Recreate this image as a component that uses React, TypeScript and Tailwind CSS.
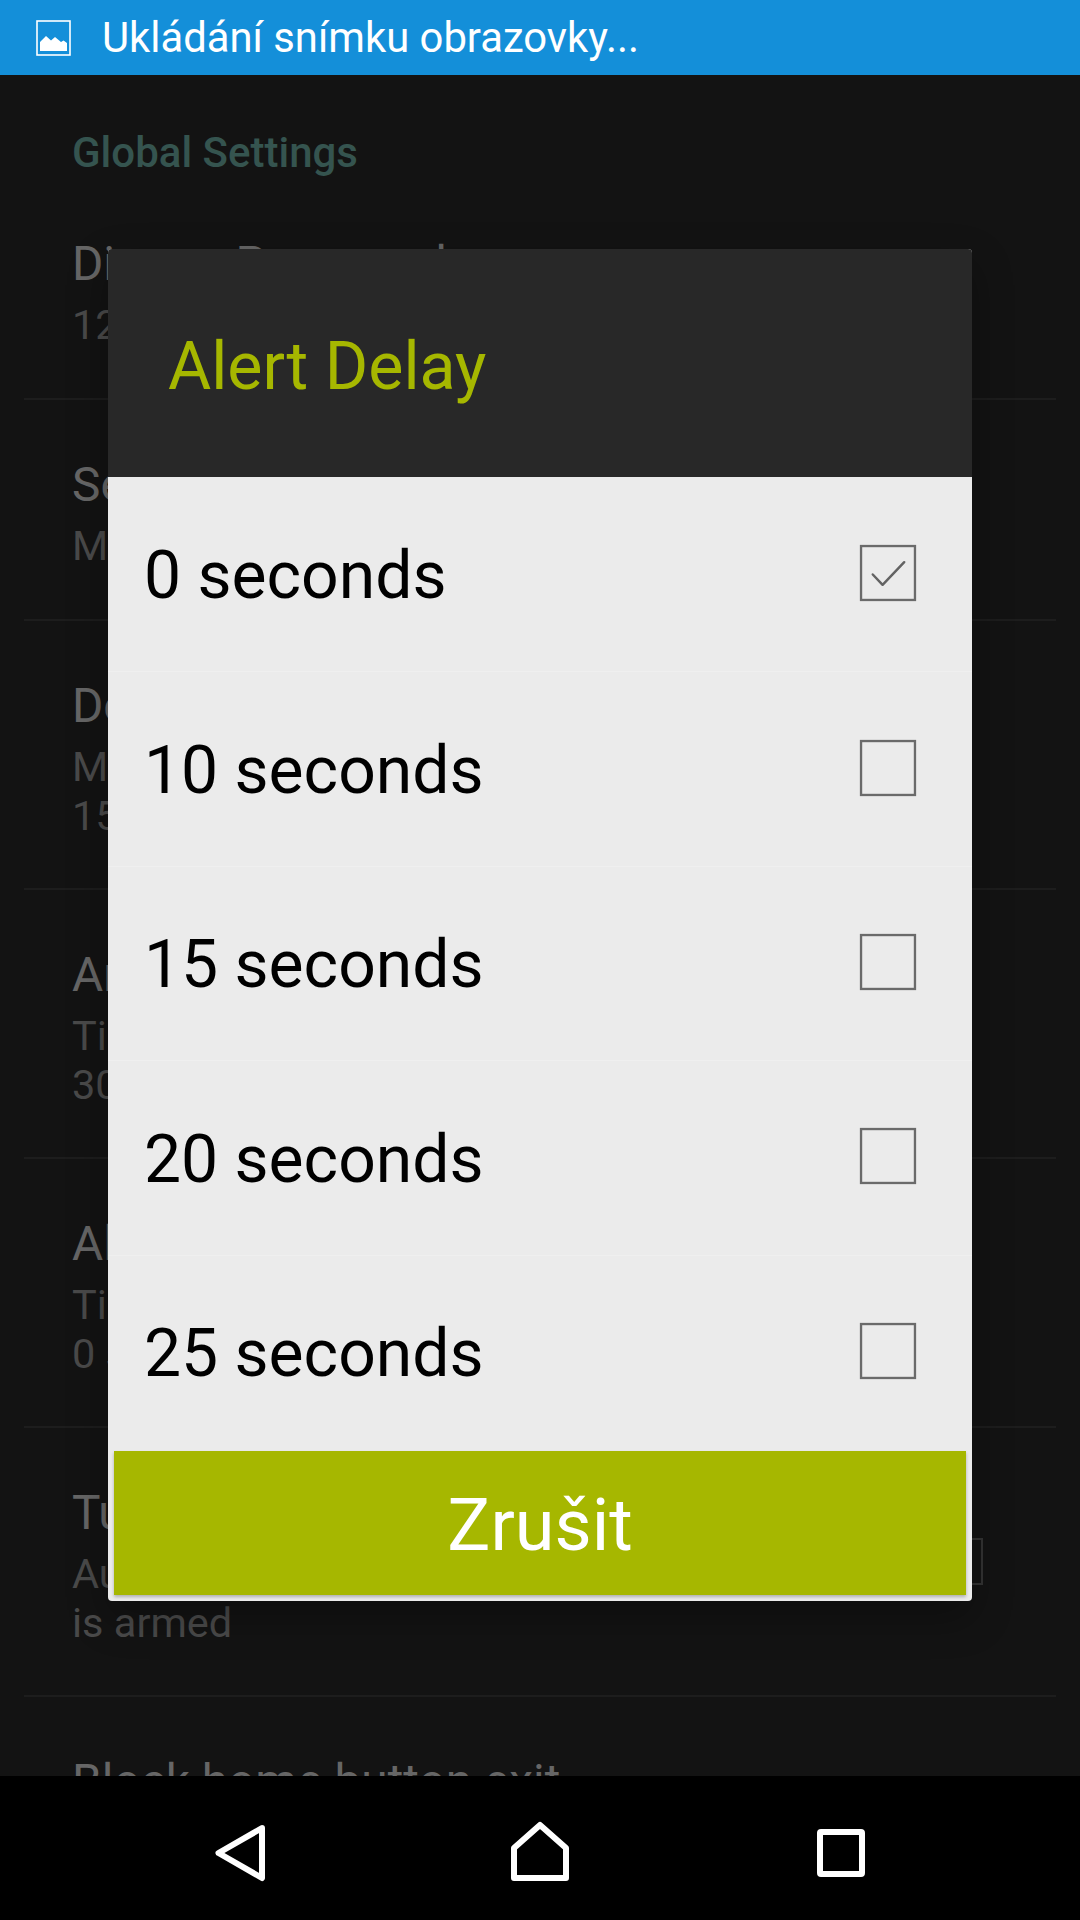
const options = ['0 seconds', '10 seconds', '15 seconds', '20 seconds', '25 seconds']

const settings = [
  { title: 'Disarm Password', lines: ['12 characters max'], h: 'h-[221px]' },
  { title: 'Set Mode', lines: ['Mode for the alert sensors'], h: 'h-[221px]' },
  { title: 'Detection Delay', lines: ['Minimum time before detecting', '15 seconds'], h: 'h-[269px]' },
  { title: 'Arm Delay', lines: ['Time before the device arms', '30 seconds'], h: 'h-[269px]' },
  { title: 'Alert Delay', lines: ['Time before the alert sounds', '0 seconds'], h: 'h-[269px]' },
  { title: 'Turn on automatically', lines: ['Automatically turn on when device', 'is armed'], h: 'h-[269px]', check: true },
]

function Box({ checked }: { checked?: boolean }) {
  return (
    <svg width="57" height="57" viewBox="0 0 58 58" fill="none" className="shrink-0 -translate-y-[1.5px] -translate-x-[0.5px]">
      <rect x="1.5" y="1.5" width="55" height="55" stroke="#6a6a6a" strokeWidth="2.5" />
      {checked && <path d="M13.5 30.5 L23.5 41 L45.5 18" stroke="#636363" strokeWidth="2.5" strokeLinecap="round" strokeLinejoin="round" />}
    </svg>
  )
}

export default function App() {
  return (
    <div className="w-[1080px] h-[1920px] flex flex-col overflow-hidden bg-[#131313] font-['Roboto',sans-serif]">
      {/* Status bar */}
      <div className="h-[75px] shrink-0 bg-[#148fd9] flex items-center pl-[36px] gap-[31px]">
        <svg width="35" height="36" viewBox="0 0 35 36" fill="none">
          <rect x="1" y="1" width="33" height="34" stroke="#fff" strokeWidth="1.6" />
          <path d="M4 31 V22 L10 16 L15 20.5 L19 17 L25 22 L27.5 20.5 L31 23 V31 Z" fill="#fff" />
        </svg>
        <span className="text-white text-[41.8px] leading-none">Ukládání snímku obrazovky...</span>
      </div>

      {/* Settings list behind the dialog */}
      <div className="relative flex-1 overflow-hidden">
        <div className="px-[24px]">
          <div className="h-[104px] pl-[48px] pt-[54px] text-[#35544f] text-[42px] leading-[48px] font-medium">Global Settings</div>
          {settings.map(s => (
            <div key={s.title} className={`${s.h} relative border-b-2 border-[#1d1d1d] pl-[48px] pt-[57px]`}>
              <div className="text-[#666666] text-[47.8px] leading-[56px] mb-[8px]">{s.title}</div>
              {s.lines.map(l => (
                <div key={l} className="text-[#4a4a4a] text-[41.5px] leading-[49px] whitespace-nowrap">{l}</div>
              ))}
              {s.check && <div className="absolute right-[73px] top-[110px] w-[56px] h-[47px] border-2 border-[#333333]" />}
            </div>
          ))}
          <div className="pl-[48px] pt-[57px] text-[#666666] text-[47.8px] leading-[56px]">Block home button exit</div>
        </div>

        {/* Dialog */}
        <div className="absolute left-[108px] top-[174px] w-[864px] h-[1352px] flex flex-col rounded-[4px] bg-[#ebebeb] shadow-[0_16px_40px_rgba(0,0,0,0.3)]">
          <div className="h-[228px] shrink-0 bg-[#282828] rounded-t-[4px] flex items-center pl-[60px] pt-[6px]">
            <span className="text-[#a6b700] text-[66.3px] leading-none">Alert Delay</span>
          </div>
          <div className="flex-1 flex flex-col">
            {options.map((o, i) => (
              <div key={o} className={`h-[194.4px] flex items-center justify-between pl-[36px] pr-[55px] ${i > 0 ? 'border-t border-[#efefef]' : ''}`}>
                <span className="text-black text-[66px] leading-none translate-y-[2px]">{o}</span>
                <Box checked={i === 0} />
              </div>
            ))}
          </div>
          <div className="h-[144px] shrink-0 mx-[6px] mb-[6px] bg-[#a6b700] flex items-center justify-center pt-[6px] shadow-[0_2px_3px_rgba(0,0,0,0.25)]">
            <span className="text-white text-[72px] leading-none">Zrušit</span>
          </div>
        </div>
      </div>

      {/* Navigation bar */}
      <div className="h-[144px] shrink-0 bg-black relative">
        <svg className="absolute left-[210px] top-[44px]" width="60" height="64" viewBox="0 0 60 64" fill="none">
          <path d="M52 8 L8.5 33 L52 58 Z" stroke="#fff" strokeWidth="6" strokeLinejoin="round" />
        </svg>
        <svg className="absolute left-[506px] top-[42px]" width="68" height="68" viewBox="0 0 68 68" fill="none">
          <path d="M34 7 L60 30 V60 H8 V30 Z" stroke="#fff" strokeWidth="6" strokeLinejoin="round" />
        </svg>
        <svg className="absolute left-[813px] top-[49px]" width="56" height="56" viewBox="0 0 56 56" fill="none">
          <rect x="7" y="7" width="42" height="42" rx="1" stroke="#fff" strokeWidth="6" />
        </svg>
      </div>
    </div>
  )
}
